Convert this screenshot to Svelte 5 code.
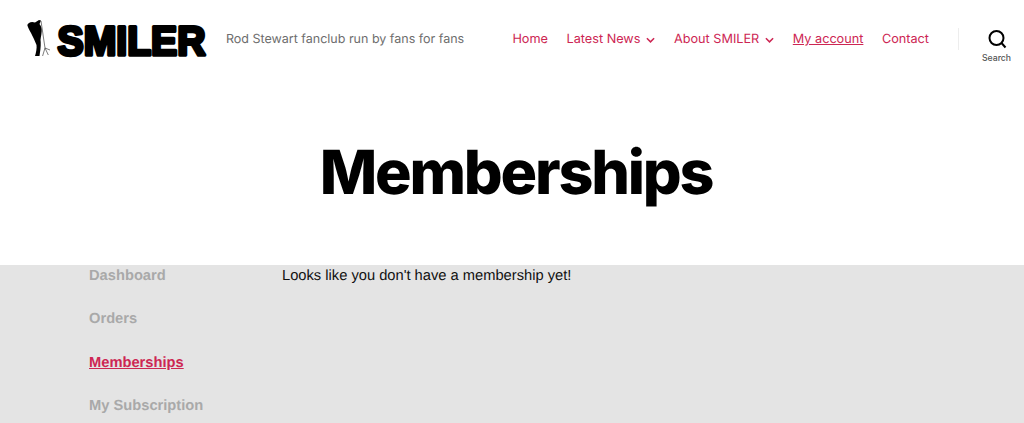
<script lang="ts">
  const nav = [
    { label: 'Home' },
    { label: 'Latest News', sub: true },
    { label: 'About SMILER', sub: true },
    { label: 'My account', current: true },
    { label: 'Contact' }
  ];
  const side = [
    { label: 'Dashboard' },
    { label: 'Orders' },
    { label: 'Memberships', active: true },
    { label: 'My Subscription' }
  ];
</script>

<div class="page">
  <header class="top">
    <a class="logo" href="#home">
      <svg class="figure" viewBox="0 0 24 38" width="24" height="38" aria-hidden="true">
        <path fill="#000" d="M1.3 5 C2 3 5 1 9 2.5 L13 0 L15 .6 L13.5 4 C15 6 16 8 15.7 11 C15.5 16 14 19 14.7 22 C15 27 14 32 13.5 36 L9 36 C10 33 11 28 10.5 25 C9 21 7 17 5 13 C3.5 10 2 8 1.3 5 Z" />
        <path fill="none" stroke="#444" stroke-width="0.7" d="M15 1 L19 28 M19 28 L16.6 36 M19 28 L22.3 35 M19 28 L24 30" />
      </svg>
      <svg class="wordmark" viewBox="0 0 152 38" width="152" height="38">
        <text x="0.5" y="34.5" textLength="148" lengthAdjust="spacingAndGlyphs">SMILER</text>
      </svg>
    </a>
    <span class="tagline">Rod Stewart fanclub run by fans for fans</span>
    <nav class="menu">
      {#each nav as item}
        <a href="#item" class:current={item.current}>
          {item.label}
          {#if item.sub}
            <svg class="chev" viewBox="0 0 10 6" width="9" height="6" aria-hidden="true">
              <path d="M1 1l4 4 4-4" fill="none" stroke="currentColor" stroke-width="1.7" />
            </svg>
          {/if}
        </a>
      {/each}
    </nav>
    <button class="search" type="button">
      <svg viewBox="0 0 20 20" width="20" height="20" aria-hidden="true">
        <circle cx="9.5" cy="9" r="7" fill="none" stroke="#000" stroke-width="2" />
        <path d="M14.5 14l4 4.5" fill="none" stroke="#000" stroke-width="2" />
      </svg>
      <span>Search</span>
    </button>
  </header>

  <h1>Memberships</h1>

  <main class="content">
    <ul class="side">
      {#each side as item}
        <li><a href="#item" class:active={item.active}>{item.label}</a></li>
      {/each}
    </ul>
    <p>Looks like you don't have a membership yet!</p>
  </main>
</div>

<style>
  :global(body) {
    background: #fff;
    overflow: hidden;
  }
  .page {
    height: 423px;
    overflow: hidden;
    font-family: Inter, "Liberation Sans", sans-serif;
    text-rendering: geometricPrecision;
  }
  a {
    text-decoration: none;
    color: inherit;
  }
  .top {
    display: flex;
    align-items: flex-start;
    height: 76px;
    padding-left: 26px;
    box-sizing: border-box;
  }
  .logo {
    display: flex;
    align-items: center;
    gap: 7px;
    width: 200px;
    height: 38px;
    margin-top: 20px;
    flex: none;
  }
  .figure {
    flex: none;
  }
  .wordmark {
    flex: none;
    overflow: visible;
  }
  .wordmark text {
    font-family: "Liberation Sans", sans-serif;
    font-weight: 700;
    font-size: 41px;
    fill: #000;
    stroke: #000;
    stroke-width: 3.5px;
    stroke-linejoin: round;
  }
  .tagline {
    padding-top: 31px;
    font-size: 12.5px;
    line-height: 17px;
    color: #6d6d6d;
    white-space: nowrap;
  }
  .menu {
    display: flex;
    gap: 18.5px;
    margin-left: auto;
    padding-top: 31px;
    font-size: 12.7px;
    line-height: 17px;
    color: #cd2653;
    white-space: nowrap;
  }
  .menu a {
    display: flex;
    align-items: center;
    gap: 6px;
  }
  .menu .current {
    text-decoration: underline;
  }
  .search {
    flex: none;
    display: flex;
    flex-direction: column;
    align-items: center;
    box-sizing: border-box;
    width: 66px;
    height: 22px;
    margin: 28px 0 0 29px;
    padding: 0 0 0 10px;
    background: none;
    border: none;
    border-left: 1px solid #ededed;
    font: inherit;
    font-size: 8.7px;
    font-weight: 500;
    color: #555;
    overflow: visible;
  }
  .search svg {
    margin-top: 1px;
    flex: none;
  }
  .search span {
    margin-top: 4px;
    line-height: 11px;
  }
  h1 {
    margin: 0;
    height: 189px;
    box-sizing: border-box;
    padding: 61px 0 0 8px;
    text-align: center;
    font-size: 61px;
    line-height: 70px;
    font-weight: 800;
    letter-spacing: -0.036em;
    color: #000;
  }
  .content {
    display: flex;
    height: 158px;
    background: #e4e4e4;
    padding-left: 89px;
    font-family: "Liberation Sans", Arial, sans-serif;
    font-size: 14.7px;
  }
  .side {
    list-style: none;
    margin: 0;
    padding: 3px 0 0;
    width: 193px;
    flex: none;
    display: flex;
    flex-direction: column;
    gap: 26.8px;
    font-weight: 700;
    color: #a9a9a9;
    line-height: 16.5px;
  }
  .active {
    color: #cd2653;
    text-decoration: underline;
  }
  p {
    margin: 0;
    padding-top: 3px;
    line-height: 16.5px;
    color: #111;
  }
</style>
